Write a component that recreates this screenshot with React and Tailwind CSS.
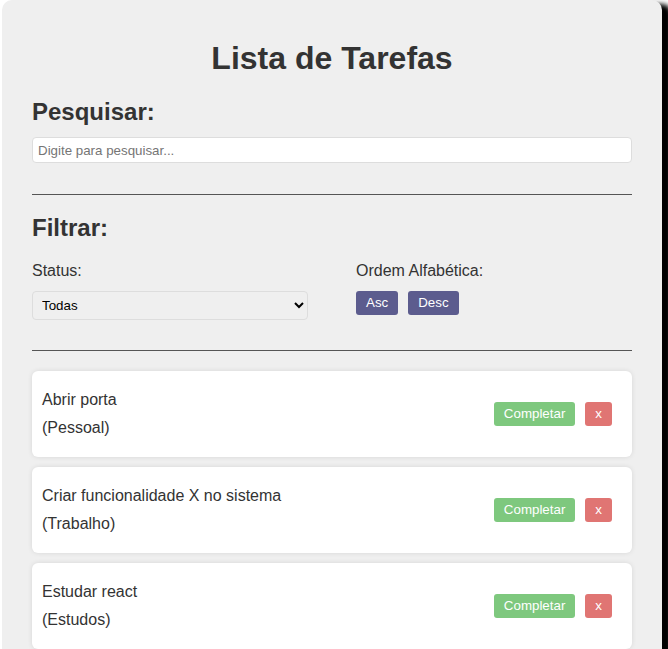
import { useState } from 'react'

const TASKS = [
  { id: 1, title: 'Abrir porta', category: 'Pessoal' },
  { id: 2, title: 'Criar funcionalidade X no sistema', category: 'Trabalho' },
  { id: 3, title: 'Estudar react', category: 'Estudos' },
]

export default function App() {
  const [search, setSearch] = useState('')
  const [status, setStatus] = useState('Todas')

  return (
    <div className="min-h-screen bg-white font-['Liberation_Sans',Arial,sans-serif] text-[#333]">
      <div className="ml-[2px] w-[660px] rounded-[10px] bg-[#efefef] px-[30px] pt-[19px] pb-[30px] shadow-[10px_4px_5px_rgba(0,0,0,1)]">
        <h1 className="my-[21px] text-center text-[32px] leading-[37px] font-bold">Lista de Tarefas</h1>

        <h2 className="mt-[21px] mb-[11px] text-[24px] leading-[28px] font-bold">Pesquisar:</h2>
        <input
          value={search}
          onChange={e => setSearch(e.target.value)}
          placeholder="Digite para pesquisar..."
          className="block h-[26px] w-full rounded-[4px] border border-[#ddd] bg-white px-[5px] text-[13.33px] placeholder:text-[#757575] outline-none"
        />

        <hr className="mt-[31px] mb-[19px] border-t border-[#555]" />

        <h2 className="mb-[20px] text-[24px] leading-[28px] font-bold">Filtrar:</h2>
        <div className="flex gap-[48px]">
          <div className="flex-1">
            <p className="text-[16px] leading-[18px]">Status:</p>
            <select
              value={status}
              onChange={e => setStatus(e.target.value)}
              className="mt-[11px] block h-[29px] w-full rounded-[4px] border border-[#ddd] bg-[#efefef] px-[5px] text-[13.33px] text-black"
            >
              <option>Todas</option>
              <option>Completas</option>
              <option>Incompletas</option>
            </select>
          </div>
          <div className="flex-1">
            <p className="text-[16px] leading-[18px]">Ordem Alfabética:</p>
            <div className="mt-[11px] flex gap-[10px]">
              <button className="h-[24px] rounded-[3px] bg-[#5c5c8e] px-[10px] text-[13.33px] text-white">Asc</button>
              <button className="h-[24px] rounded-[3px] bg-[#5c5c8e] px-[10px] text-[13.33px] text-white">Desc</button>
            </div>
          </div>
        </div>

        <hr className="mt-[30px] mb-[20px] border-t border-[#555]" />

        <div className="flex flex-col gap-[10px]">
          {TASKS.map(t => (
            <div key={t.id} className="flex items-center justify-between rounded-[6px] bg-white px-[10px] py-[10px] shadow-[0_0_5px_rgba(0,0,0,0.1)]">
              <div>
                <p className="my-[10px] text-[16px] leading-[18px]">{t.title}</p>
                <p className="my-[10px] text-[16px] leading-[18px]">({t.category})</p>
              </div>
              <div className="mr-[10px] flex gap-[10px]">
                <button className="h-[24px] rounded-[3px] bg-[#7ec87e] px-[10px] text-[13.33px] text-white">Completar</button>
                <button className="h-[24px] rounded-[3px] bg-[#e07573] px-[10px] text-[13.33px] text-white">x</button>
              </div>
            </div>
          ))}
        </div>
      </div>
    </div>
  )
}
